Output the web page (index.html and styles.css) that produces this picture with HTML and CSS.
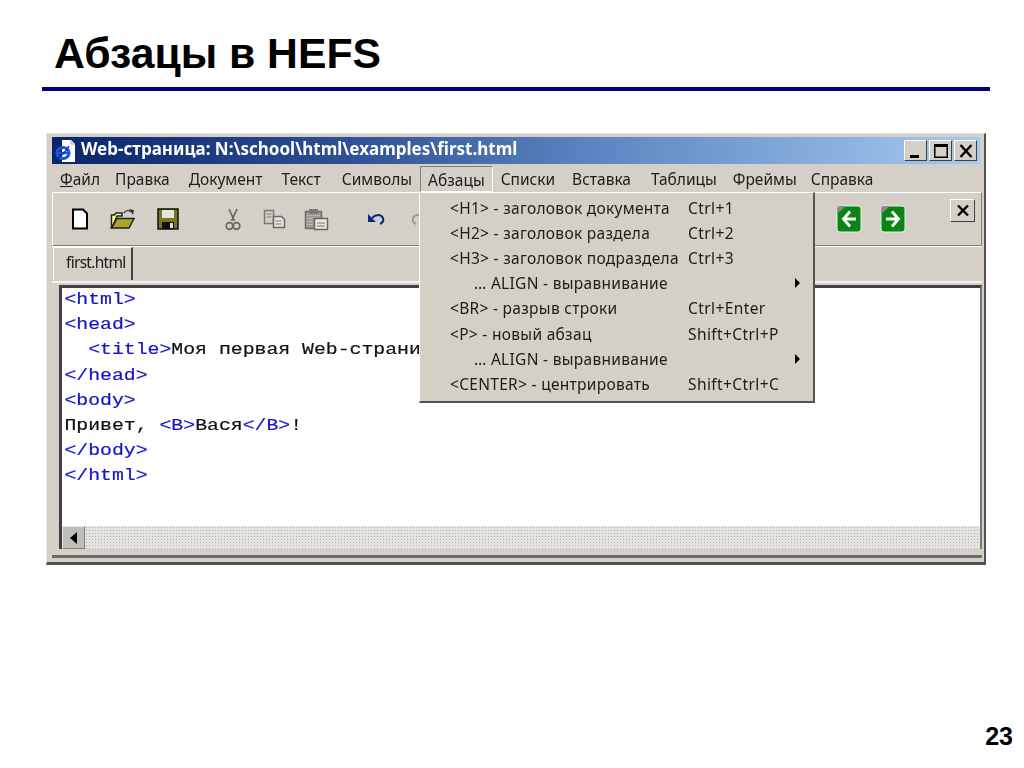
FILE: index.html
```html
<!DOCTYPE html>
<html lang="ru">
<head>
<meta charset="utf-8">
<title>Абзацы в HEFS</title>
<link rel="stylesheet" href="styles.css">
</head>
<body>
<div class="slide">
  <h1 class="slide-title">Абзацы в HEFS</h1>
  <div class="rule"></div>
  <div class="window">
    <div class="titlebar">
      <svg class="app-icon" width="24" height="24" viewBox="0 0 24 24"><path d="M9 1h9l4 4v18H9z" fill="#fff"/><path d="M18 1v4h4" fill="none" stroke="#9ab"/><ellipse cx="10" cy="14" rx="6" ry="5.500" fill="none" stroke="#1c55e0" stroke-width="3.200"/><path d="M5 14h10" stroke="#1c55e0" stroke-width="2.500"/><path d="M1 21c4-1 12-8 15-14" stroke="#0a2a90" stroke-width="1.300" fill="none"/></svg>
      <span class="title-text">Web-страница: N:\school\html\examples\first.html</span>
      <div class="caption-btns">
        <span class="cap-btn"><svg width="20" height="18" viewBox="0 0 20 18"><rect x="4" y="13" width="9" height="3" fill="#000"/></svg></span>
        <span class="cap-btn"><svg width="20" height="18" viewBox="0 0 20 18"><path d="M3 2h14v14H3z M4.500 5v9.500h11V5z" fill="#000" fill-rule="evenodd"/></svg></span>
        <span class="cap-btn"><svg width="20" height="18" viewBox="0 0 20 18"><path d="M4.500 3l11 12M15.500 3l-11 12" stroke="#000" stroke-width="2.400"/></svg></span>
      </div>
    </div>
    <nav class="menubar">
      <span class="menu-item"><u>Ф</u>айл</span>
      <span class="menu-item">Правка</span>
      <span class="menu-item">Документ</span>
      <span class="menu-item">Текст</span>
      <span class="menu-item">Символы</span>
      <span class="menu-item active">Абзацы</span>
      <span class="menu-item">Списки</span>
      <span class="menu-item">Вставка</span>
      <span class="menu-item">Таблицы</span>
      <span class="menu-item">Фреймы</span>
      <span class="menu-item">Справка</span>
    </nav>
    <div class="toolbar">
      <svg class="tool t-new" width="18" height="22" viewBox="0 0 18 22"><path d="M2 1.500h10l4 4v15H2z" fill="#fff" stroke="#000" stroke-width="2"/></svg>
      <svg class="tool t-open" width="26" height="22" viewBox="0 0 26 22"><path d="M1.500 20V7h3l1.500-2h6v3H7l-5 12z" fill="#ffffa0" stroke="#222" stroke-width="1.500"/><path d="M1.500 20L7 10.500h17L19 20z" fill="#b0a428" stroke="#222" stroke-width="1.500"/><path d="M14 5c2-3 5-3 7-1" fill="none" stroke="#444" stroke-width="1.500"/><path d="M19 1l5 1-1 5z" fill="#333"/></svg>
      <svg class="tool t-save" width="22" height="22" viewBox="0 0 22 22"><path d="M1 1h20v20H1z" fill="#77771c" stroke="#111" stroke-width="1.500"/><path d="M5 2h12v8H5z" fill="#e6e6e0"/><path d="M5 14h12v7H5z" fill="#111"/><path d="M13 15h3v5h-3z" fill="#ddd"/></svg>
      <svg class="tool t-cut" width="16" height="23" viewBox="0 0 16 23"><path d="M4 1l5.500 12M12 1L6.500 13" stroke="#666" stroke-width="1.700" fill="none"/><circle cx="4.500" cy="18" r="3.300" fill="none" stroke="#666" stroke-width="1.700"/><circle cx="11.500" cy="18" r="3.300" fill="none" stroke="#666" stroke-width="1.700"/></svg>
      <svg class="tool t-copy" width="23" height="20" viewBox="0 0 23 20"><path d="M1.500 1.500h9v13h-9z" fill="#d4d0c8" stroke="#777" stroke-width="1.500"/><path d="M3.500 5h5M3.500 8h5" stroke="#777"/><path d="M10.500 7.500h8l3 3v8h-11z" fill="#e8e6e0" stroke="#666" stroke-width="1.500"/><path d="M12.500 12h6M12.500 15h6" stroke="#777"/></svg>
      <svg class="tool t-paste" width="25" height="23" viewBox="0 0 25 23"><path d="M1.500 3.500h16v17h-16z" fill="#a09d96" stroke="#6c6c6c" stroke-width="1.500"/><path d="M5 1h9v5H5z" fill="#777"/><path d="M3 7.500h13M3 10.500h6M3 13.500h6M3 16.500h6" stroke="#cfcdc6" stroke-dasharray="1 1"/><path d="M10.500 10.500h13v11h-13z" fill="#e8e6e0" stroke="#666" stroke-width="1.500"/><path d="M13 15h8M13 18h8" stroke="#777"/></svg>
      <svg class="tool t-undo" width="19" height="14" viewBox="0 0 19 14"><path d="M5 6c4-4 9-4 11 0 1 3-1 5-3 6" fill="none" stroke="#0a2a80" stroke-width="2"/><path d="M1 2v8h8z" fill="#0a2a80"/></svg>
      <svg class="tool t-redo" width="19" height="14" viewBox="0 0 19 14"><path d="M14 6C10 2 5 2 3 6c-1 3 1 5 3 6" fill="none" stroke="#999" stroke-width="2"/></svg>
      <span class="tool-spacer"></span>
      <svg class="tool t-back" width="26" height="28" viewBox="0 0 26 28"><rect x="1" y="1" width="24" height="26" rx="3" fill="#0a8414" stroke="#e2f2e2"/><path d="M1 9V4q0-3 3-3h6z" fill="#8a8a8a"/><path d="M14 6.500l-6.500 7.500 6.500 7.500M8 14h12" fill="none" stroke="#fff" stroke-width="2.800"/></svg>
      <svg class="tool t-fwd" width="26" height="28" viewBox="0 0 26 28"><rect x="1" y="1" width="24" height="26" rx="3" fill="#0a8414" stroke="#e2f2e2"/><path d="M1 9V4q0-3 3-3h6z" fill="#8a8a8a"/><path d="M12 6.500l6.500 7.500-6.500 7.500M18 14H6" fill="none" stroke="#fff" stroke-width="2.800"/></svg>
      <span class="tool-close"><svg width="14" height="13" viewBox="0 0 14 13"><path d="M2 1.500l10 10M12 1.500l-10 10" stroke="#000" stroke-width="2.400"/></svg></span>
    </div>
    <div class="tabstrip"><span class="tab">first.html</span></div>
    <div class="editor">
      <pre class="code"><span class="tag">&lt;html&gt;</span>
<span class="tag">&lt;head&gt;</span>
  <span class="tag">&lt;title&gt;</span>Моя первая Web-страни
<span class="tag">&lt;/head&gt;</span>
<span class="tag">&lt;body&gt;</span>
Привет, <span class="tag">&lt;B&gt;</span>Вася<span class="tag">&lt;/B&gt;</span>!
<span class="tag">&lt;/body&gt;</span>
<span class="tag">&lt;/html&gt;</span></pre>
      <div class="hscroll">
        <span class="scroll-btn"><svg width="8" height="12" viewBox="0 0 8 12"><path d="M7 0v12L0 6z" fill="#000"/></svg></span>
        <span class="scroll-track"></span>
      </div>
    </div>
    <div class="win-foot"></div>
    <div class="menu">
      <div class="row"><span class="label">&lt;H1&gt; - заголовок документа</span><span class="key">Ctrl+1</span></div>
      <div class="row"><span class="label">&lt;H2&gt; - заголовок раздела</span><span class="key">Ctrl+2</span></div>
      <div class="row"><span class="label">&lt;H3&gt; - заголовок подраздела</span><span class="key">Ctrl+3</span></div>
      <div class="row sub"><span class="label">… ALIGN - выравнивание</span><span class="arrow"></span></div>
      <div class="row"><span class="label">&lt;BR&gt; - разрыв строки</span><span class="key">Ctrl+Enter</span></div>
      <div class="row"><span class="label">&lt;P&gt; - новый абзац</span><span class="key">Shift+Ctrl+P</span></div>
      <div class="row sub"><span class="label">… ALIGN - выравнивание</span><span class="arrow"></span></div>
      <div class="row"><span class="label">&lt;CENTER&gt; - центрировать</span><span class="key">Shift+Ctrl+C</span></div>
    </div>
  </div>
  <div class="page-num">23</div>
</div>
</body>
</html>
```
FILE: styles.css
```css
* { box-sizing: border-box; }
html, body { margin: 0; padding: 0; background: #fff; }
.slide {
  width: 1024px;
  height: 768px;
  padding: 29px 34px 0 42px;
  position: relative;
  overflow: hidden;
  font-family: "Liberation Sans", Arial, sans-serif;
}
.slide-title {
  margin: 0 0 0 12px;
  height: 58px;
  font-size: 42.7px;
  line-height: 49px;
  font-weight: 700;
  color: #000;
}
.rule { height: 4px; background: #000080; }
.window {
  position: relative;
  margin: 42px 0 0 4px;
  width: 940px;
  height: 432px;
  background: #d4d0c8;
  border-top: 1px solid #e8e6e0;
  border-left: 1px solid #e8e6e0;
  border-right: 2px solid #55534e;
  border-bottom: 3px solid #55534e;
  padding: 3px 2px 0 5px;
  display: flex;
  flex-direction: column;
  font-family: "Noto Sans", "Liberation Sans", sans-serif;
  font-size: 15.5px;
  color: #1c1c1c;
  filter: blur(0.4px);
}
.titlebar {
  height: 27px;
  flex: none;
  display: flex;
  align-items: center;
  margin-right: 2px;
  background: linear-gradient(90deg, #0a246a 0%, #2c4d92 30%, #5f88c4 60%, #a6caf0 100%);
  color: #fff;
  padding: 0 3px 0 1px;
}
.app-icon { flex: none; margin-right: 4px; }
.title-text {
  font-weight: 700;
  font-size: 17px;
  line-height: 24px;
  padding-bottom: 3px;
  white-space: pre;
}
.caption-btns { margin-left: auto; display: flex; gap: 2px; }
.cap-btn {
  width: 23px;
  height: 21px;
  background: #d4d0c8;
  border: 1px solid;
  border-color: #fff #404040 #404040 #fff;
  display: flex;
  align-items: center;
  justify-content: center;
}
.menubar {
  height: 28px;
  flex: none;
  display: flex;
  align-items: center;
  padding: 2px 0 0 3px;
}
.menu-item {
  padding: 0 5px;
  margin-right: 7px;
  white-space: nowrap;
  height: 26px;
  line-height: 26px;
}
.menu-item:nth-child(1) { margin-right: 5px; }
.menu-item:nth-child(2) { margin-right: 9px; }
.menu-item:nth-child(3) { margin-right: 9px; }
.menu-item:nth-child(4) { margin-right: 11px; }
.menu-item:nth-child(5) { margin-right: 3px; }
.menu-item:nth-child(8) { margin-right: 10px; }
.menu-item:nth-child(9) { margin-right: 6px; }
.menu-item:nth-child(10) { margin-right: 4px; }
.menu-item.active {
  border: 1px solid;
  border-color: #808080 #fff #fff #808080;
  padding: 0 7px;
  margin: 0 3px 0 0;
  line-height: 26px;
}
.toolbar {
  height: 54px;
  flex: none;
  display: flex;
  align-items: center;
  padding-left: 18px;
  border: 1px solid;
  border-color: #fff #808080 #808080 #fff;
  position: relative;
}
.tool { flex: none; }
.t-new { margin-right: 21px; }
.t-open { margin-right: 21px; }
.t-save { margin-right: 46px; }
.t-cut { margin-right: 22px; }
.t-copy { margin-right: 18px; }
.t-paste { margin-right: 38px; }
.t-undo { margin-right: 24px; }
.tool-spacer { flex: 1; }
.t-back { margin-right: 18px; }
.t-fwd { margin-right: 44px; }
.tool-close {
  width: 25px;
  height: 23px;
  margin: -18px 6px 0 0;
  border: 1px solid;
  border-color: #fff #404040 #404040 #fff;
  display: flex;
  align-items: center;
  justify-content: center;
}
.tabstrip {
  height: 37px;
  flex: none;
  padding: 2px 0 0 1px;
  border-bottom: 2px solid #f4f2ee;
  display: flex;
  align-items: flex-end;
  border-top: 1px solid #fff;
}
.tab {
  height: 33px;
  width: 80px;
  line-height: 28px;
  padding-left: 12px;
  font-size: 15.5px;
  letter-spacing: -0.7px;
  border-top: 1px solid #fff;
  border-left: 1px solid #fff;
  border-right: 2px solid #404040;
  margin-bottom: 1px;
}
.editor {
  flex: 1;
  margin: 2px 0 0 7px;
  min-height: 0;
  display: flex;
  flex-direction: column;
  background: #fff;
  border-top: 3px solid #404040;
  border-left: 3px solid #404040;
  border-right: 2px solid #777;
  overflow: hidden;
}
.code {
  flex: 1;
  margin: -1px 0 0;
  padding: 0 0 0 2px;
  font-family: "Liberation Mono", "Courier New", monospace;
  font-size: 16.5px;
  line-height: 25.2px;
  color: #111;
  -webkit-text-stroke: 0.2px currentColor;
  transform: scaleX(1.2);
  transform-origin: left top;
  overflow: hidden;
}
.tag { color: #1414c8; }
.hscroll { height: 23px; flex: none; display: flex; background: #d4d0c8; }
.scroll-btn {
  width: 23px;
  height: 23px;
  flex: none;
  background: #c0beb8;
  border: 1px solid;
  border-color: #e8e6e0 #808080 #808080 #e8e6e0;
  display: flex;
  align-items: center;
  justify-content: center;
}
.scroll-track {
  flex: 1;
  background-color: #e6e4e0;
  background-image: radial-gradient(#b8b6b0 0.7px, transparent 0.8px);
  background-size: 3px 3px;
}
.win-foot {
  flex: none;
  height: 3px;
  margin: 6px 0 4px;
  background: #6b6b66;
}
.menu {
  position: absolute;
  left: 372px;
  top: 58px;
  width: 396px;
  height: 211px;
  background: #d4d0c8;
  border-top: 1px solid #fff;
  border-left: 1px solid #fff;
  border-right: 2px solid #55534e;
  border-bottom: 2px solid #55534e;
  padding-top: 2px;
}
.row {
  height: 25.2px;
  display: flex;
  align-items: center;
  padding-left: 30px;
  letter-spacing: 0.3px;
  white-space: nowrap;
  position: relative;
}
.row.sub { padding-left: 54px; }
.label { width: 238px; flex: none; }
.row.sub .label { width: 321px; }
.key { letter-spacing: 0.4px; }
.arrow {
  width: 0;
  height: 0;
  border-left: 5px solid #000;
  border-top: 5px solid transparent;
  border-bottom: 5px solid transparent;
}
.page-num {
  position: absolute;
  right: 11px;
  bottom: 17px;
  font-size: 25px;
  font-weight: 700;
  color: #000;
}
```
